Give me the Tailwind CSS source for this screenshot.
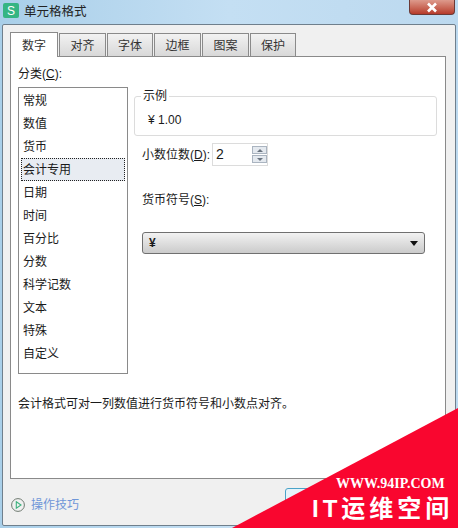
<!DOCTYPE html>
<html lang="zh-CN">

<head>
    <meta charset="UTF-8">
    <title>单元格格式</title>
    <script src="https://cdn.jsdelivr.net/npm/@tailwindcss/browser@4"></script>
</head>

<body class="overflow-hidden">

    <div class="relative w-[458px] h-[528px] overflow-hidden bg-gradient-to-r from-[#a9cfe9] via-[#c4dff3] to-[#bcd9ef] text-[12px] text-[#1a1a1a] font-['Liberation_Sans','Noto_Sans_CJK_SC',sans-serif]">

        <!-- Titolo -->
        <div class="h-6 flex items-center pl-[3px] gap-[5px]">
            <div class="w-[16px] h-[15px] mb-[3px] rounded-[2px] bg-[#35b583] text-white text-[12px] flex items-center justify-center">S</div>
            <span class="text-[12.5px] text-[#222]">单元格格式</span>
        </div>

        <!-- Chiudi -->
        <div class="absolute top-0 right-[3px] w-[46px] h-[15px] rounded-b-[4px] border border-t-0 border-[#6b3a36] bg-gradient-to-b from-[#dd9a8c] to-[#b63a2a] flex items-center justify-center">
            <svg width="12" height="11" viewBox="0 0 12 11" fill="none">
                <path d="M2 1.5 L10 9.5 M10 1.5 L2 9.5" stroke="#ffffff" stroke-width="2.6" />
            </svg>
        </div>

        <!-- Finestra -->
        <div class="ml-[2px] mr-[2px] h-[502px] border border-[#6f7f8c] rounded-[2px] bg-[#f0f0f0] px-[7px] pt-[7px]">

            <!-- Tab -->
            <div class="flex items-end h-[24px] gap-[1px] text-[#333]">
                <div class="relative z-10 w-[48px] h-[25px] mb-[-1px] pt-[1px] bg-white border border-b-0 border-[#8a8a8a] flex items-center justify-center">数字</div>
                <div class="w-[47px] h-[23px] pt-[1px] bg-gradient-to-b from-[#f2f2f2] to-[#d8d8d8] border border-b-0 border-[#8a8a8a] flex items-center justify-center">对齐</div>
                <div class="w-[46px] h-[23px] pt-[1px] bg-gradient-to-b from-[#f2f2f2] to-[#d8d8d8] border border-b-0 border-[#8a8a8a] flex items-center justify-center">字体</div>
                <div class="w-[47px] h-[23px] pt-[1px] bg-gradient-to-b from-[#f2f2f2] to-[#d8d8d8] border border-b-0 border-[#8a8a8a] flex items-center justify-center">边框</div>
                <div class="w-[47px] h-[23px] pt-[1px] bg-gradient-to-b from-[#f2f2f2] to-[#d8d8d8] border border-b-0 border-[#8a8a8a] flex items-center justify-center">图案</div>
                <div class="w-[46px] h-[23px] pt-[1px] bg-gradient-to-b from-[#f2f2f2] to-[#d8d8d8] border border-b-0 border-[#8a8a8a] flex items-center justify-center">保护</div>
            </div>

            <!-- Pannello -->
            <div class="w-[436px] h-[423px] bg-white border border-[#8a8a8a] px-[7px] pt-[9px]">
                <div class="h-[21px] leading-[16px]">分类(<span class="underline">C</span>):</div>

                <div class="flex h-[287px]">
                    <!-- Lista categorie -->
                    <div class="w-[110px] h-[287px] border border-[#8a8a8a] pt-[1px] px-[2px]">
                        <div class="h-[23px] flex items-center pl-[2px]">常规</div>
                        <div class="h-[23px] flex items-center pl-[2px]">数值</div>
                        <div class="h-[23px] flex items-center pl-[2px]">货币</div>
                        <div class="h-[23px] flex items-center pl-[1px] bg-[#e8ecf2] border border-dotted border-[#222]">会计专用</div>
                        <div class="h-[23px] flex items-center pl-[2px]">日期</div>
                        <div class="h-[23px] flex items-center pl-[2px]">时间</div>
                        <div class="h-[23px] flex items-center pl-[2px]">百分比</div>
                        <div class="h-[23px] flex items-center pl-[2px]">分数</div>
                        <div class="h-[23px] flex items-center pl-[2px]">科学记数</div>
                        <div class="h-[23px] flex items-center pl-[2px]">文本</div>
                        <div class="h-[23px] flex items-center pl-[2px]">特殊</div>
                        <div class="h-[23px] flex items-center pl-[2px]">自定义</div>
                    </div>

                    <!-- Dettagli -->
                    <div class="ml-[6px] w-[303px]">
                        <div class="relative h-[40px] mt-[9px] border border-[#dcdcdc] rounded-[3px] pl-[13px] pt-[14px]">
                            <span class="absolute left-[6px] top-[-10px] bg-white px-[2px]">示例</span>
                            <span>¥ 1.00</span>
                        </div>

                        <div class="flex items-center mt-[7px] ml-[8px] h-[23px]">
                            <span>小数位数(<span class="underline">D</span>):</span>
                            <div class="ml-[2px] w-[56px] h-[23px] border border-[#dcdcdc] flex items-center justify-between pl-[3px] text-[14px]">
                                <span>2</span>
                                <div class="w-[15px] h-[17px] flex flex-col gap-[1px]">
                                    <div class="flex-1 border border-[#aab4c0] bg-[#e4e9ef] flex items-center justify-center">
                                        <div class="border-x-[3px] border-b-[3px] border-x-transparent border-b-[#6a7480]"></div>
                                    </div>
                                    <div class="flex-1 border border-[#aab4c0] bg-[#e4e9ef] flex items-center justify-center">
                                        <div class="border-x-[3px] border-t-[3px] border-x-transparent border-t-[#6a7480]"></div>
                                    </div>
                                </div>
                            </div>
                        </div>

                        <div class="mt-[26px] ml-[8px] h-[20px] leading-[16px]">货币符号(<span class="underline">S</span>):</div>

                        <div class="mt-[20px] ml-[8px] w-[283px] h-[22px] rounded-[3px] border border-[#707070] bg-gradient-to-b from-[#f2f2f2] to-[#cbcbcb] flex items-center justify-between pl-[6px] pr-[6px] text-[12px] font-bold">
                            <span>¥</span>
                            <div class="border-x-[4px] border-t-[5px] border-x-transparent border-t-[#111]"></div>
                        </div>
                    </div>
                </div>

                <div class="mt-[21px]">会计格式可对一列数值进行货币符号和小数点对齐。</div>
            </div>

            <!-- Piede -->
            <div class="flex items-center h-[46px] pt-[6px] pl-[1px] gap-[6px] text-[#6f96d8]">
                <svg width="14" height="14" viewBox="0 0 14 14" fill="none">
                    <circle cx="7" cy="7" r="6.4" stroke="#6f7a70" />
                    <path d="M5.3 3.8 L10 7 L5.3 10.2 Z" stroke="#3fb27f" stroke-width="1.1" />
                </svg>
                <span>操作技巧</span>
            </div>
        </div>

        <!-- Bottone coperto -->
        <div class="absolute left-[285px] top-[488px] w-[70px] h-[26px] rounded-[3px] border border-[#4aa3c8] bg-[#e6f3fa]"></div>

        <!-- Banner rosso -->
        <svg class="absolute left-0 top-0" width="458" height="528" viewBox="0 0 458 528">
            <polygon points="458,408 458,528 232,528" fill="#f9062f" />
        </svg>
        <div class="absolute left-[336px] top-[477px] text-white font-bold text-[14px] leading-none whitespace-nowrap font-['Liberation_Serif','Noto_Sans_CJK_SC',serif]">WWW.94IP.COM</div>
        <div class="absolute left-[312px] top-[493px] text-white font-bold text-[24px] leading-[32px] tracking-[4px] whitespace-nowrap">IT运维空间</div>
    </div>

</body>

</html>
